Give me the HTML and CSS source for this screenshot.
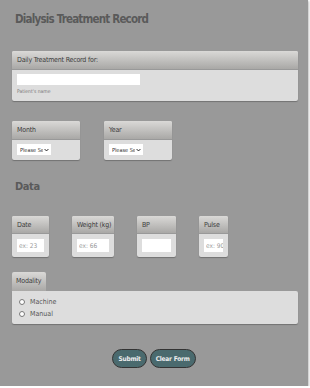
FILE: index.html
```html
<!DOCTYPE html>
<html lang="en">
<head>
  <meta charset="UTF-8" />
  <title>Dialysis Treatment Record</title>
  <link rel="stylesheet" href="styles.css">
</head>
<body>
  <form class="page">
    <h1 class="page-title">Dialysis Treatment Record</h1>

    <!-- Patient -->
    <div class="panel panel-wide">
      <div class="panel-head">Daily Treatment Record for:</div>
      <div class="panel-body">
        <input type="text" class="input-name" />
        <div class="note">Patient's name</div>
      </div>
    </div>

    <!-- Month / Year -->
    <div class="row row-date">
      <div class="panel box-month">
        <div class="panel-head">Month</div>
        <div class="panel-body">
          <span class="select-wrap">
            <select class="small-select"><option>Please Select</option></select>
            <svg class="chevron" viewBox="0 0 8 6" width="5" height="4"><path d="M1 1.5 L4 4.5 L7 1.5" fill="none" stroke="#222" stroke-width="1.6"/></svg>
          </span>
        </div>
      </div>
      <div class="panel box-month">
        <div class="panel-head">Year</div>
        <div class="panel-body">
          <span class="select-wrap">
            <select class="small-select"><option>Please Select</option></select>
            <svg class="chevron" viewBox="0 0 8 6" width="5" height="4"><path d="M1 1.5 L4 4.5 L7 1.5" fill="none" stroke="#222" stroke-width="1.6"/></svg>
          </span>
        </div>
      </div>
    </div>

    <h2 class="section-title">Data</h2>

    <div class="row row-data">
      <div class="panel box-date">
        <div class="panel-head">Date</div>
        <div class="panel-body"><input type="text" class="field" placeholder="ex: 23" /></div>
      </div>
      <div class="panel box-weight">
        <div class="panel-head">Weight (kg)</div>
        <div class="panel-body"><input type="text" class="field" placeholder="ex: 66" /></div>
      </div>
      <div class="panel box-bp">
        <div class="panel-head">BP</div>
        <div class="panel-body"><input type="text" class="field" /></div>
      </div>
      <div class="panel box-pulse">
        <div class="panel-head">Pulse</div>
        <div class="panel-body"><input type="text" class="field" placeholder="ex: 90" /></div>
      </div>
    </div>

    <!-- Modality -->
    <div class="modality">
      <div class="tab">Modality</div>
      <div class="tab-body">
        <label class="radio"><input type="radio" name="modality" /> Machine</label>
        <label class="radio"><input type="radio" name="modality" /> Manual</label>
      </div>
    </div>

    <div class="actions">
      <button type="button" class="btn">Submit</button>
      <button type="reset" class="btn">Clear Form</button>
    </div>
  </form>
</body>
</html>
```

FILE: styles.css
```css
* {
  margin: 0;
  padding: 0;
  box-sizing: border-box;
}
body {
  background: #fff;
  font-family: "DejaVu Sans Condensed", "DejaVu Sans", sans-serif;
  color: #555;
}
.page {
  width: 308px;
  height: 386px;
  background: #999;
  padding: 11px 10px 0 12px;
  box-shadow: 1px 1px 2px rgba(0,0,0,0.25);
}
.page-title {
  font-size: 11.5px;
  line-height: 16px;
  font-weight: bold;
  letter-spacing: -0.8px;
  color: #5a5a5a;
  padding-left: 3px;
}
/* Panels */
.panel {
  background: #dddddd;
  border-radius: 2px;
  box-shadow: 0 1px 1px rgba(0,0,0,0.25);
  overflow: hidden;
}
.panel-head {
  height: 19px;
  line-height: 19px;
  padding: 0 5px;
  font-size: 7px;
  letter-spacing: -0.2px;
  color: #3c3c3c;
  background: linear-gradient(#dad9d7, #a9a8a6);
  border-bottom: 1px solid #999;
  white-space: nowrap;
}
.panel-wide {
  margin-top: 24px;
}
.panel-wide .panel-body {
  padding: 4px 5px 5px;
  height: 31px;
}
.input-name {
  display: block;
  width: 123px;
  height: 11px;
  border: none;
  background: #fff;
}
.note {
  font-size: 5px;
  color: #777;
  margin-top: 3px;
}
.row {
  display: flex;
}
.row-date {
  margin-top: 20px;
  gap: 24px;
}
.box-month {
  width: 68px;
}
.box-month .panel-body {
  height: 20px;
  padding: 4px 5px 0;
}
.select-wrap {
  position: relative;
  display: block;
  width: 34px;
}
.small-select {
  display: block;
  width: 34px;
  height: 11px;
  font-size: 5.5px;
  border: none;
  background: #fff;
  color: #333;
  font-family: inherit;
  padding: 0 8px 0 3px;
  appearance: none;
  -webkit-appearance: none;
}
.chevron {
  position: absolute;
  right: 2px;
  top: 4px;
}
.section-title {
  font-size: 11px;
  line-height: 14px;
  font-weight: bold;
  letter-spacing: -0.4px;
  color: #5a5a5a;
  padding-left: 3px;
  margin-top: 20px;
}
.row-data {
  margin-top: 22px;
  gap: 23px;
}
.row-data .panel-head {
  height: 18px;
  line-height: 18px;
}
.row-data .panel-body {
  height: 23px;
  padding: 5px 5px 0;
}
.box-date { width: 37px; }
.box-weight { width: 42px; }
.box-bp { width: 39px; }
.box-pulse { width: 29px; }
.field {
  display: block;
  width: 100%;
  height: 13px;
  border: none;
  background: #fff;
  font-size: 6.5px;
  padding-left: 2px;
  color: #333;
  font-family: inherit;
}
.field::placeholder {
  color: #999;
}
/* Modality */
.modality {
  margin-top: 15px;
}
.tab {
  display: inline-block;
  height: 19px;
  line-height: 19px;
  padding: 0 5px 0 4px;
  font-size: 7px;
  letter-spacing: -0.2px;
  color: #3c3c3c;
  background: linear-gradient(#dad9d7, #a9a8a6);
  border-radius: 2px 2px 0 0;
  vertical-align: top;
}
.tab-body {
  background: #dddddd;
  border-radius: 0 2px 2px 2px;
  box-shadow: 0 1px 1px rgba(0,0,0,0.25);
  height: 33px;
  padding: 5px 0 0 7px;
}
.radio {
  display: flex;
  align-items: center;
  height: 12px;
  font-size: 7px;
  color: #555;
}
.radio input {
  width: 6px;
  height: 6px;
  margin: 0 5px 0 0;
}
/* Buttons */
.actions {
  display: flex;
  justify-content: center;
  gap: 3px;
  margin-top: 25px;
  padding-right: 2px;
}
.btn {
  height: 19px;
  padding: 0 5px;
  border-radius: 10px;
  border: 1px solid #333;
  background: #4a6a6e;
  color: #eee;
  font-size: 6.5px;
  font-weight: bold;
  letter-spacing: -0.2px;
  font-family: inherit;
}
```
